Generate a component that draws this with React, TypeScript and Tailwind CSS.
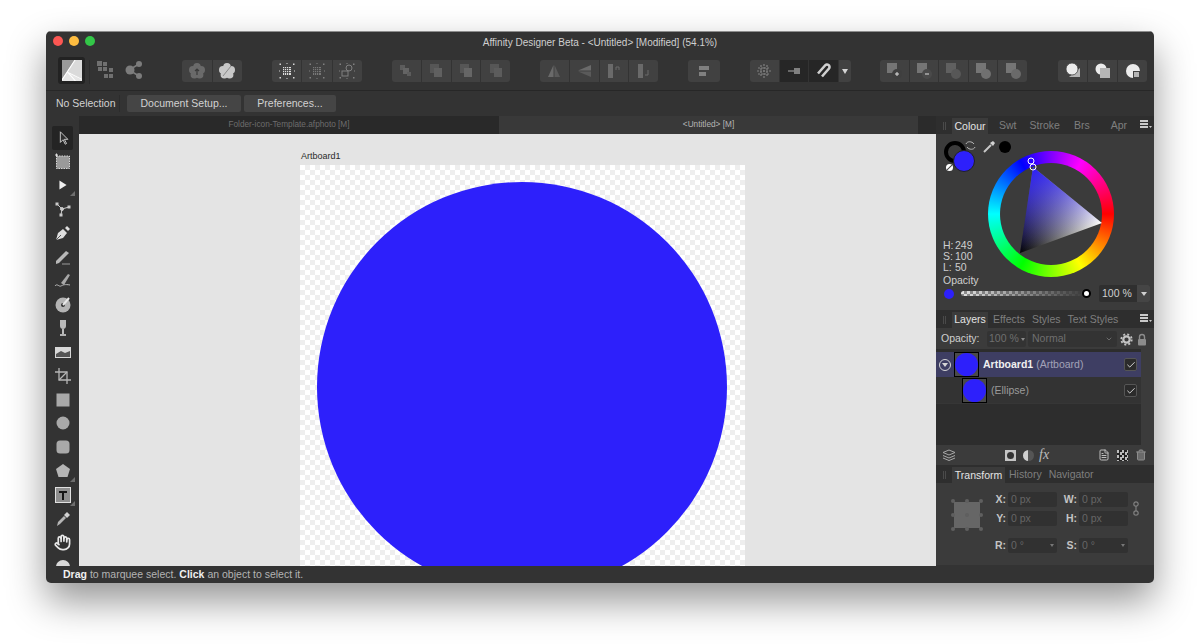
import type { ReactNode } from "react";
import { Check, ChevronDown, FileText, Trash2, Hand } from "lucide-react";

const BLUE = "#2d20fb";

function Svg({ children, size = 18 }: { children: ReactNode; size?: number }) {
  return (
    <svg width={size} height={size} viewBox="0 0 18 18">
      {children}
    </svg>
  );
}

function Btn({ children, dark }: { children: ReactNode; dark?: boolean }) {
  return (
    <div
      className={`flex h-[22px] min-w-0 flex-1 items-center justify-center ${dark ? "bg-[#262626]" : "bg-[#414141]"}`}
    >
      {children}
    </div>
  );
}

function Group({ children, cls }: { children: ReactNode; cls: string }) {
  return <div className={`flex gap-px overflow-hidden rounded-[3px] ${cls}`}>{children}</div>;
}

const dim = "#6a6a6a";
const dim2 = "#808080";
const lit = "#d6d6d6";

function Corners({ c = lit }: { c?: string }) {
  return (
    <g fill={c}>
      <rect x="1.500" y="1.500" width="1.500" height="1.500" />
      <rect x="15" y="1.500" width="1.500" height="1.500" />
      <rect x="1.500" y="15" width="1.500" height="1.500" />
      <rect x="15" y="15" width="1.500" height="1.500" />
      <rect x="8.500" y="1" width="1" height="1" />
      <rect x="8.500" y="16" width="1" height="1" />
      <rect x="1" y="8.500" width="1" height="1" />
      <rect x="16" y="8.500" width="1" height="1" />
    </g>
  );
}

function Flower({ c }: { c: string }) {
  return (
    <g fill={c}>
      <circle cx="9" cy="4.800" r="3.800" />
      <circle cx="13.200" cy="7.900" r="3.800" />
      <circle cx="11.600" cy="12.800" r="3.800" />
      <circle cx="6.400" cy="12.800" r="3.800" />
      <circle cx="4.800" cy="7.900" r="3.800" />
      <circle cx="9" cy="9.500" r="4" />
    </g>
  );
}

function GridSquare({ fill }: { fill: string }) {
  return (
    <>
      <path d="M5 5h8v8H5z" fill={fill} />
      <path d="M6.500 5v8M8.500 5v8M10.500 5v8M5 6.500h8M5 8.500h8M5 10.500h8" stroke="#414141" strokeWidth=".8" />
    </>
  );
}

function TwoSquares({ c }: { c: string }) {
  return (
    <Svg>
      <rect x="3" y="2" width="9" height="9" fill="#565656" />
      <rect x="7" y="6" width="8" height="9" fill={c} />
    </Svg>
  );
}

function BooleanIcon({ c, sq = "#757575", glyph }: { c: string; sq?: string; glyph?: string }) {
  return (
    <Svg>
      <rect x="2" y="1" width="10" height="10" fill={sq} />
      <circle cx="12" cy="12" r="5" fill={c} />
      {glyph && <path d={glyph} stroke="#dcdcdc" strokeWidth="1" />}
    </Svg>
  );
}

function Toolbar() {
  return (
    <div className="flex h-[31px] items-start border-b border-[#272727] pl-[12px]">
      <div className="-mt-[3px] flex h-[27px] w-[27px] items-center justify-center rounded-[3px] bg-[#222222]">
        <svg width="20" height="21" viewBox="0 0 20 21">
          <rect width="20" height="21" fill="#e6e6e6" />
          <path d="M0 0h13L0 19z" fill="#9a9a9a" />
          <path d="M13 0 0 20M5.500 12 20 19M5.500 12l8 9" stroke="#ffffff" strokeWidth="1.100" fill="none" />
          <path d="M6 12 14 0h6v19z" fill="#d2d2d2" opacity=".6" />
        </svg>
      </div>
      <div className="ml-[4px] h-[24px] w-px bg-[#2b2b2b]" />
      <div className="ml-[7px] mt-px">
        <svg width="18" height="18" viewBox="0 0 18 18" fill="#707070">
          <rect x="0" y="0" width="5" height="5" />
          <rect x="6" y="1" width="4" height="4" />
          <rect x="1" y="6" width="4" height="4" />
          <rect x="6" y="6" width="4" height="4" />
          <rect x="12" y="7" width="4" height="4" />
          <rect x="7" y="13" width="4" height="4" />
          <rect x="12" y="13" width="4" height="4" />
        </svg>
      </div>
      <div className="ml-[10px] mt-px">
        <svg width="18" height="18" viewBox="0 0 18 18">
          <path d="M14 3 4 9l10 6" stroke="#7c7c7c" strokeWidth="1.600" fill="none" />
          <circle cx="14" cy="3" r="3" fill="#7c7c7c" />
          <circle cx="5" cy="9" r="4.500" fill="#7c7c7c" />
          <circle cx="14" cy="15" r="3" fill="#7c7c7c" />
        </svg>
      </div>
      <Group cls="ml-[39px] w-[60px]">
        <Btn>
          <Svg>
            <Flower c={dim} />
            <path d="M9 13V7M7 9l2-2 2 2" stroke="#3a3a3a" strokeWidth="1.200" fill="none" />
          </Svg>
        </Btn>
        <Btn>
          <Svg>
            <Flower c="#c8c8c8" />
            <path d="M5 14 13 4" stroke="#8a8a8a" strokeWidth="1" />
          </Svg>
        </Btn>
      </Group>
      <Group cls="ml-[30px] w-[90px]">
        <Btn>
          <Svg>
            <Corners />
            <GridSquare fill="#dcdcdc" />
          </Svg>
        </Btn>
        <Btn>
          <Svg>
            <Corners c={dim2} />
            <GridSquare fill="#777777" />
          </Svg>
        </Btn>
        <Btn>
          <Svg>
            <Corners c={dim2} />
            <rect x="4" y="9" width="6" height="5" fill="none" stroke={dim2} />
            <circle cx="11" cy="6" r="3" fill="none" stroke={dim2} />
          </Svg>
        </Btn>
      </Group>
      <Group cls="ml-[30px] w-[118px]">
        <Btn>
          <Svg>
            <rect x="3" y="3" width="5" height="5" fill="#5c5c5c" />
            <rect x="6" y="6" width="6" height="6" fill="#646464" />
            <rect x="10" y="10" width="4" height="4" fill="#5c5c5c" />
          </Svg>
        </Btn>
        <Btn>
          <TwoSquares c="#606060" />
        </Btn>
        <Btn>
          <TwoSquares c="#666666" />
        </Btn>
        <Btn>
          <TwoSquares c="#5c5c5c" />
        </Btn>
      </Group>
      <Group cls="ml-[30px] w-[118px]">
        <Btn>
          <Svg>
            <path d="M8.500 3v12H3z" fill={dim} />
            <path d="M9.500 3l5.500 12H9.500z" fill="#5a5a5a" />
          </Svg>
        </Btn>
        <Btn>
          <Svg>
            <path d="M16 3v5.500L3 8.500z" fill={dim} />
            <path d="M16 9.500V15L3 9.500z" fill="#5a5a5a" />
          </Svg>
        </Btn>
        <Btn>
          <Svg>
            <rect x="3" y="2" width="5" height="14" fill={dim} />
            <path d="M11 8V5h3v3" stroke={dim} fill="none" />
          </Svg>
        </Btn>
        <Btn>
          <Svg>
            <rect x="3" y="2" width="5" height="14" fill={dim} />
            <path d="M13 8v5h-3" stroke={dim} fill="none" />
          </Svg>
        </Btn>
      </Group>
      <Group cls="ml-[30px] w-[32px]">
        <Btn>
          <Svg>
            <rect x="4" y="4" width="10" height="4" fill={dim2} />
            <rect x="4" y="10" width="7" height="4" fill={dim2} />
          </Svg>
        </Btn>
      </Group>
      <Group cls="ml-[30px] w-[101px]">
        <Btn>
          <Svg>
            <path d="M9 2v14M2 9h14M6 3v12M12 3v12M3 6h12M3 12h12" stroke={dim2} strokeWidth="1.200" strokeDasharray="2 1" />
          </Svg>
        </Btn>
        <Btn dark>
          <Svg>
            <path d="M3 9h6" stroke={dim2} strokeWidth="1.400" />
            <rect x="9" y="6" width="6" height="6" fill={dim2} />
          </Svg>
        </Btn>
        <Btn dark>
          <Svg>
            <path d="M3 11.500 10 3.500a2.500 2.500 0 0 1 4 3l-7 8" stroke="#cfcfcf" strokeWidth="2.600" fill="none" />
          </Svg>
        </Btn>
        <div className="flex h-[22px] w-[12px] shrink-0 items-center justify-center bg-[#414141]">
          <div className="h-0 w-0 border-x-[3px] border-t-[5px] border-x-transparent border-t-[#d4d4d4]" />
        </div>
      </Group>
      <Group cls="ml-[29px] w-[147px]">
        <Btn>
          <BooleanIcon c="#3f3f3f" glyph="M10 12h4M12 10v4" />
        </Btn>
        <Btn>
          <BooleanIcon c="#4a4a4a" glyph="M10 12h4" />
        </Btn>
        <Btn>
          <BooleanIcon c="#575757" sq="#606060" />
        </Btn>
        <Btn>
          <BooleanIcon c="#707070" />
        </Btn>
        <Btn>
          <BooleanIcon c="#6a6a6a" />
        </Btn>
      </Group>
      <Group cls="ml-[31px] w-[89px]">
        <Btn>
          <Svg>
            <path d="M5 15h11V6z" fill="#b5b5b5" />
            <circle cx="8" cy="7" r="6" fill="#ececec" stroke="#414141" strokeWidth=".8" />
          </Svg>
        </Btn>
        <Btn>
          <Svg>
            <circle cx="7" cy="7" r="5.500" fill="#ececec" />
            <rect x="6" y="6" width="10" height="10" fill="#b5b5b5" />
          </Svg>
        </Btn>
        <Btn>
          <Svg>
            <circle cx="9" cy="9" r="7" fill="#ececec" />
            <path d="M9 9h7v7H9z" fill="#414141" />
            <path d="M10 10h5v5h-5z" fill="#b5b5b5" />
          </Svg>
        </Btn>
      </Group>
    </div>
  );
}

function ContextBar() {
  return (
    <div className="flex h-[25px] items-center pl-[10px] text-[10.5px] text-[#d2d2d2]">
      <span className="w-[59px] whitespace-nowrap">No Selection</span>
      <div className="ml-[4px] h-[17px] w-px bg-[#2c2c2c]" />
      <div className="ml-[7px] flex h-[17px] w-[114px] items-center justify-center rounded-[2px] bg-[#454545]">
        Document Setup...
      </div>
      <div className="ml-[3px] flex h-[17px] w-[92px] items-center justify-center rounded-[2px] bg-[#454545]">
        Preferences...
      </div>
    </div>
  );
}

const toolC = "#c9c9c9";

const tools: ReactNode[] = [
  <path key="a" d="M6 2v12l3-3 2.500 5 1.500-.8-2.500-4.700h4z" fill="#303030" stroke="#d6d6d6" strokeWidth="1" />,
  <g key="b">
    <rect x="2.500" y="3" width="13" height="12.500" fill="#9a9a9a" stroke="#d6d6d6" strokeDasharray="1.500 1" />
    <path d="M1 2h3M2.500 .5v3" stroke="#e0e0e0" />
  </g>,
  <path key="c" d="M5 4l8 5-8 5z" fill="#f0f0f0" />,
  <g key="d" stroke={toolC} strokeWidth="1" fill="none">
    <path d="M8 9 3 4M8 9l7-2M8 9l-1 6" />
    <circle cx="8" cy="9" r="1.500" fill={toolC} />
    <rect x="2" y="3" width="2" height="2" fill={toolC} />
    <rect x="14" y="6" width="2" height="2" fill={toolC} />
    <rect x="6" y="14" width="2" height="2" fill={toolC} />
  </g>,
  <g key="e">
    <path d="M2 16l2-7 5-4 4 4-4 5z" fill="#dedede" />
    <path d="M2 16l5-5" stroke="#333" strokeWidth=".8" />
    <path d="M11 4l2-2 3 3-2 2z" fill="#dedede" />
  </g>,
  <g key="f">
    <path d="M2 13 12 3l3 2L5 15l-3 1z" fill="#b8b8b8" />
    <path d="M8 16h8" stroke="#9a9a9a" />
  </g>,
  <g key="g">
    <path d="M7 11 14 2l2 1-6 10z" fill="#a8a8a8" />
    <path d="M1 14c2-3 4 1 6 0s4-2 9-1" stroke="#b8b8b8" fill="none" />
  </g>,
  <g key="h">
    <circle cx="9" cy="10" r="7.500" fill="#b4b4b4" />
    <circle cx="9" cy="10" r="2" fill="#333" />
    <path d="M9 10 15 3" stroke="#e8e8e8" strokeWidth="2" />
  </g>,
  <g key="i">
    <path d="M6 1h6v6c0 2-1.500 3-3 3S6 9 6 7z" fill="#bbbbbb" />
    <path d="M9 10v5M6 16h6" stroke="#dcdcdc" strokeWidth="1.600" />
  </g>,
  <g key="j">
    <rect x="1" y="4" width="16" height="11" fill="#d8d8d8" />
    <path d="M2 11l5-3 4 2 5-2v6H2z" fill="#555" />
  </g>,
  <g key="k" stroke="#b5b5b5" fill="none" strokeWidth="1.300">
    <path d="M5 1v12h12M1 5h12v12" />
    <path d="M5 13 13 5" />
  </g>,
  <rect key="l" x="2.500" y="2.500" width="13" height="13" fill="#a9a9a9" />,
  <circle key="m" cx="9" cy="9" r="6.500" fill="#a9a9a9" />,
  <rect key="n" x="2.500" y="2.500" width="13" height="13" rx="3.500" fill="#a9a9a9" />,
  <path key="o" d="M9 2l7 5-2.500 8h-9L2 7z" fill="#b5b5b5" />,
  <g key="p">
    <rect x="1.500" y="1.500" width="15" height="15" fill="#8e8e8e" stroke="#e0e0e0" />
    <path d="M5 5h8v2h-3v7H8V7H5z" fill="#141414" />
  </g>,
  <g key="q">
    <path d="M3 16l1-4 6-6 2 2-6 6z" fill="#b5b5b5" />
    <path d="M10 5l3-3 3 3-3 3z" fill="#d2d2d2" />
  </g>,
];

function ToolStrip() {
  return (
    <div className="flex h-full w-[33px] flex-col items-center overflow-hidden bg-[#333333] pt-[10px]">
      {tools.map((t, i) => (
        <div
          key={i}
          className={`relative flex h-[23.8px] w-[21px] shrink-0 items-center justify-center ${i === 0 ? "rounded-[2px] bg-[#242424]" : ""}`}
        >
          <Svg size={i === 0 || i === 2 ? 16 : 18}>{t}</Svg>
          {(i === 2 || i === 14 || i === 15) && (
            <div className="absolute bottom-[1px] right-[-2px] h-0 w-0 border-b-[5px] border-l-[5px] border-b-[#6e6e6e] border-l-transparent" />
          )}
        </div>
      ))}
      <div className="flex h-[23.8px] shrink-0 items-center justify-center">
        <Hand size={17} color="#e8e8e8" strokeWidth={2.400} />
      </div>
      <div className="mt-[6px] h-[16px] w-[14px] shrink-0 rounded-full bg-[#d8d8d8]" />
    </div>
  );
}

function CenterArea() {
  return (
    <div className="flex w-[857px] flex-col">
      <div className="flex h-[18px] text-[8.25px] leading-[18px]">
        <div className="w-[420px] bg-[#292929] text-center text-[#6d6d6d]">Folder-icon-Template.afphoto [M]</div>
        <div className="w-[419px] bg-[#393939] text-center text-[#b4b4b4]">&lt;Untitled&gt; [M]</div>
        <div className="flex-1 bg-[#2b2b2b]" />
      </div>
      <div className="h-[432px] overflow-hidden bg-[#e4e4e4] pl-[221px] pt-[17px]">
        <div className="h-[14px] pl-px text-[9px] leading-[10px] text-[#2a2a2a]">Artboard1</div>
        <div className="h-[445px] w-[445px] bg-[image:repeating-conic-gradient(#eeeeee_0_25%,#ffffff_0_50%)] bg-[length:10px_10px] p-[17px]">
          <div className="h-[410px] w-[410px] rounded-full bg-[#2d20fb]" />
        </div>
      </div>
    </div>
  );
}

function PanelTabs({ children, menu }: { children: ReactNode; menu?: boolean }) {
  return (
    <div className="relative flex h-[18px] items-end bg-[#2e2e2e] pl-[7px] text-[10.5px] text-[#7f7f7f]">
      <div className="mb-[4px] mr-[6px] h-[8px] w-[3px] border-x border-[#4a4a4a]" />
      {children}
      {menu && (
        <svg className="absolute right-[2px] top-[4px]" width="12" height="9" viewBox="0 0 12 9" fill="#c8c8c8">
          <rect x="0" y="0" width="8" height="2" />
          <rect x="0" y="3" width="8" height="2" />
          <rect x="0" y="6" width="8" height="2" />
          <path d="M9 6h3l-1.500 2z" />
        </svg>
      )}
    </div>
  );
}

function ActiveTab({ label, w }: { label: string; w: string }) {
  return <div className={`flex h-[16px] items-center justify-center bg-[#3b3b3b] text-[#e4e4e4] ${w}`}>{label}</div>;
}

function HslRow({ k, v }: { k: string; v: string }) {
  return (
    <div className="flex">
      <span className="w-[12px]">{k}</span>
      <span>{v}</span>
    </div>
  );
}

function ColourPanel() {
  return (
    <div className="h-[176px] bg-[#3b3b3b]">
      <div className="flex h-[140px]">
        <div className="flex w-[52px] flex-col justify-between pb-[1px] pl-[7px] pt-[7px] text-[10.5px] leading-[11px] text-[#cfcfcf]">
          <div className="relative h-[34px] w-[34px]">
            <div className="ml-px h-[22px] w-[22px] rounded-full border-[4px] border-black" />
            <div className="absolute left-[10px] top-[9px] h-[22px] w-[22px] rounded-full border border-[#222] bg-[#2d20fb]" />
            <div className="absolute left-[3px] top-[23px] flex h-[7px] w-[7px] items-center justify-center rounded-full bg-white">
              <div className="h-px w-[7px] -rotate-45 bg-[#444]" />
            </div>
            <svg className="absolute left-[22px] top-[-1px]" width="11" height="11" viewBox="0 0 11 11">
              <path d="M1 4c1-3 6-3 8 0M10 7c-1 3-6 3-8 0" stroke="#b9b9b9" fill="none" />
            </svg>
          </div>
          <div>
            <HslRow k="H:" v="249" />
            <HslRow k="S:" v="100" />
            <HslRow k="L:" v="50" />
          </div>
        </div>
        <div className="relative mt-[17px] flex h-[126px] w-[126px] items-center justify-center rounded-full bg-[image:conic-gradient(from_90deg,#ff0000,#ffff00,#00ff00,#00ffff,#0000ff,#ff00ff,#ff0000)]">
          <div className="h-[102px] w-[102px] rounded-full bg-[#3b3b3b]" />
          <svg className="absolute left-0 top-0" width="126" height="126" viewBox="0 0 126 126">
            <defs>
              <linearGradient id="bw" gradientUnits="userSpaceOnUse" x1="32" y1="102" x2="114" y2="72">
                <stop offset="0" stopColor="#000" />
                <stop offset="1" stopColor="#fff" />
              </linearGradient>
              <linearGradient id="hue" gradientUnits="userSpaceOnUse" x1="45" y1="16" x2="73" y2="87">
                <stop offset="0" stopColor={BLUE} />
                <stop offset="1" stopColor={BLUE} stopOpacity="0" />
              </linearGradient>
            </defs>
            <path d="M45 16 114 72 32 102z" fill="url(#bw)" />
            <path d="M45 16 114 72 32 102z" fill="url(#hue)" />
            <circle cx="45" cy="16" r="3" fill="none" stroke="#fff" />
            <circle cx="43" cy="10" r="3" fill="none" stroke="#fff" />
          </svg>
          <svg className="absolute left-[-6px] top-[-11px]" width="14" height="14" viewBox="0 0 14 14">
            <path d="M2 12 9 5" stroke="#c8c8c8" strokeWidth="2" />
            <path d="M8 3l3 3 2-3-2-2z" fill="#d2d2d2" />
          </svg>
          <div className="absolute left-[11px] top-[-10px] h-[12px] w-[12px] rounded-full bg-black" />
        </div>
      </div>
      <div className="pl-[7px] text-[10.5px] leading-[13px] text-[#cfcfcf]">Opacity</div>
      <div className="-mt-[2px] flex items-center pl-[8px]">
        <div className="h-[10px] w-[10px] rounded-full bg-[#2d20fb]" />
        <div className="relative ml-[7px] h-[5px] w-[126px] rounded-full bg-[image:repeating-conic-gradient(#8e8e8e_0_25%,#e2e2e2_0_50%)] bg-[length:6px_6px]">
          <div className="h-full w-full rounded-full bg-[image:linear-gradient(90deg,#ffffff00,#3b3b3b)]" />
          <div className="absolute right-[-4px] top-[-2px] h-[9px] w-[9px] rounded-full border-2 border-black bg-white" />
        </div>
        <div className="ml-[12px] flex h-[17px] w-[51px] overflow-hidden rounded-[2px] bg-[#2f2f2f] text-[10.5px] leading-[17px] text-[#d0d0d0]">
          <div className="w-[38px] pl-[3px]">100 %</div>
          <div className="flex flex-1 items-center justify-center bg-[#454545]">
            <div className="h-0 w-0 border-x-[3px] border-t-[4px] border-x-transparent border-t-[#d0d0d0]" />
          </div>
        </div>
      </div>
    </div>
  );
}

function Thumb() {
  return (
    <div className="flex h-[25px] w-[25px] shrink-0 items-center justify-center border border-black bg-[#4a4a4a]">
      <div className="h-[23px] w-[23px] rounded-full bg-[#2d20fb]" />
    </div>
  );
}

function Tick() {
  return (
    <div className="flex h-[13px] w-[13px] items-center justify-center rounded-[2px] border border-[#555555] bg-[#2b2b2b]">
      <Check size={10} color="#f0f0f0" strokeWidth={2} />
    </div>
  );
}

function LayersPanel() {
  return (
    <div className="bg-[#3b3b3b]">
      <PanelTabs menu>
        <ActiveTab label="Layers" w="w-[36px]" />
        <span className="ml-[5px]">Effects</span>
        <span className="ml-[7px]">Styles</span>
        <span className="ml-[7px]">Text Styles</span>
      </PanelTabs>
      <div className="flex h-[21px] items-center pl-[5px] pt-px text-[10.5px]">
        <span className="w-[46px] text-[#cfcfcf]">Opacity:</span>
        <div className="flex h-[16px] w-[39px] items-center rounded-[2px] bg-[#333333] pl-[2px] text-[#6f6f6f]">
          100 %
          <div className="ml-[2px] h-0 w-0 border-x-[2px] border-t-[3px] border-x-transparent border-t-[#8a8a8a]" />
        </div>
        <div className="ml-[2px] flex h-[16px] w-[89px] items-center justify-between rounded-[2px] bg-[#333333] pl-[4px] pr-[4px] text-[#6f6f6f]">
          Normal
          <ChevronDown size={8} color="#8a8a8a" />
        </div>
        <svg className="ml-[3px]" width="13" height="13" viewBox="0 0 13 13" fill="none">
          <circle cx="6.500" cy="6.500" r="3.200" stroke="#c4c4c4" strokeWidth="2.200" />
          <circle cx="6.500" cy="6.500" r="5.200" stroke="#c4c4c4" strokeWidth="1.800" strokeDasharray="2 2.100" />
        </svg>
        <svg className="ml-[3px]" width="12" height="13" viewBox="0 0 12 13" fill="none">
          <path d="M3.500 6V4a2.500 2.500 0 0 1 5 0v2" stroke="#8c8c8c" strokeWidth="1.400" />
          <rect x="2" y="6" width="8" height="6.500" rx="1" fill="#8c8c8c" />
        </svg>
      </div>
      <div className="flex h-[96px]">
        <div className="w-[205px] bg-[#2d2d2d] pt-[3px] text-[10.5px]">
          <div className="flex h-[25px] items-center bg-[#3e3e63] pl-[3px]">
            <div className="mr-[3px] flex h-[12px] w-[12px] items-center justify-center rounded-full border border-[#d6d6d6]">
              <div className="h-0 w-0 border-x-[3px] border-t-[4px] border-x-transparent border-t-[#d6d6d6]" />
            </div>
            <Thumb />
            <span className="ml-[4px] font-bold text-[#f0f0f0]">Artboard1</span>
            <span className="ml-[3px] text-[#a2a2b8]">(Artboard)</span>
            <div className="ml-auto mr-[4px]">
              <Tick />
            </div>
          </div>
          <div className="flex h-[27px] items-center border-b border-[#363636] bg-[#333333] pl-[26px] pt-px">
            <Thumb />
            <span className="ml-[4px] text-[#9a9a9a]">(Ellipse)</span>
            <div className="ml-auto mr-[4px]">
              <Tick />
            </div>
          </div>
        </div>
        <div className="flex-1 bg-[#3b3b3b]" />
      </div>
      <div className="flex h-[20px] items-center bg-[#3b3b3b] pl-[6px]">
        <svg width="14" height="13" viewBox="0 0 14 13" fill="none" stroke="#a8a8a8">
          <path d="M1 3.500 7 1l6 2.500L7 6zM1 6.500 7 9l6-2.500M1 9l6 2.500L13 9" />
        </svg>
        <div className="ml-[49px] h-[11px] w-[11px] bg-[#c4c4c4] p-[2px]">
          <div className="h-[7px] w-[7px] rounded-full bg-[#333333]" />
        </div>
        <div className="ml-[7px] h-[11px] w-[11px] rounded-full bg-[image:linear-gradient(90deg,#cfcfcf_50%,#555555_50%)]" />
        <span className="ml-[5px] w-[13px] font-['Liberation_Serif',serif] text-[14px] italic leading-[14px] text-[#bdbdbd]">fx</span>
        <FileText className="ml-[46px]" size={12} color="#bdbdbd" />
        <div className="ml-[7px] h-[11px] w-[11px] bg-[image:repeating-conic-gradient(#222222_0_25%,#bdbdbd_0_50%)] bg-[length:5px_5px]" />
        <Trash2 className="ml-[7px]" size={12} color="#8c8c8c" fill="#6a6a6a" />
      </div>
    </div>
  );
}

function Field({ label, value, arrow }: { label: string; value: string; arrow?: boolean }) {
  return (
    <div className="flex items-center">
      <span className="w-[20px] text-right font-bold text-[#c4c4c4]">{label}</span>
      <div className="ml-[2px] flex h-[15px] w-[49px] items-center justify-between rounded-[2px] bg-[#313131] px-[3px] text-[#666666]">
        {value}
        {arrow && <div className="h-0 w-0 border-x-[2px] border-t-[3px] border-x-transparent border-t-[#777777]" />}
      </div>
    </div>
  );
}

function TransformPanel() {
  return (
    <div className="h-[100px]">
      <PanelTabs>
        <ActiveTab label="Transform" w="w-[53px] pt-[2px]" />
        <span className="ml-[4px]">History</span>
        <span className="ml-[7px]">Navigator</span>
      </PanelTabs>
      <div className="flex h-[82px] bg-[#3b3b3b] pl-[15px] pt-[9px] text-[10.5px]">
        <svg className="mt-[7px] shrink-0" width="32" height="32" viewBox="0 0 32 32" fill="#5f5f5f">
          <rect x="3" y="3" width="26" height="26" fill="#666666" />
          {[2, 16, 30].flatMap((x) =>
            [2, 16, 30].map((y) => <circle key={`${x}-${y}`} cx={x} cy={y} r="2" />),
          )}
        </svg>
        <div className="ml-[3px] flex flex-col">
          <div className="grid grid-cols-[71px_71px] gap-y-[3px]">
            <Field label="X:" value="0 px" />
            <Field label="W:" value="0 px" />
            <Field label="Y:" value="0 px" />
            <Field label="H:" value="0 px" />
          </div>
          <div className="mt-[11px] grid grid-cols-[71px_71px]">
            <Field label="R:" value="0 °" arrow />
            <Field label="S:" value="0 °" arrow />
          </div>
        </div>
        <svg className="ml-[5px] mt-[8px]" width="6" height="17" viewBox="0 0 6 17" fill="none" stroke="#7f7f7f" strokeWidth="1.200">
          <circle cx="3" cy="4" r="2.200" />
          <circle cx="3" cy="13" r="2.200" />
          <path d="M3 6v5" />
        </svg>
      </div>
    </div>
  );
}

function RightPanels() {
  return (
    <div className="flex w-[218px] flex-col">
      <PanelTabs menu>
        <ActiveTab label="Colour" w="w-[36px] pt-[2px]" />
        <span className="ml-[11px]">Swt</span>
        <span className="ml-[13px]">Stroke</span>
        <span className="ml-[14px]">Brs</span>
        <span className="ml-[21px]">Apr</span>
      </PanelTabs>
      <ColourPanel />
      <LayersPanel />
      <TransformPanel />
    </div>
  );
}

export default function App() {
  return (
    <div className="h-[644px] w-[1200px] overflow-hidden bg-white pl-[46px] pt-[31px] font-['Liberation_Sans',Arial,sans-serif]">
      <div className="flex h-[552px] w-[1108px] flex-col overflow-hidden rounded-[5px] bg-[#333333] shadow-[0_18px_38px_rgba(0,0,0,0.42)]">
        <div className="relative flex h-[22px] shrink-0 items-center justify-center border-t border-[#8d8d8d] text-[10px] text-[#cfcfcf]">
          <div className="absolute left-[7px] top-[4px] flex gap-[6px]">
            <div className="h-[10px] w-[10px] rounded-full bg-[#fc5753]" />
            <div className="h-[10px] w-[10px] rounded-full bg-[#fdbc40]" />
            <div className="h-[10px] w-[10px] rounded-full bg-[#33c748]" />
          </div>
          Affinity Designer Beta - &lt;Untitled&gt; [Modified] (54.1%)
        </div>
        <div className="h-[7px] shrink-0" />
        <Toolbar />
        <ContextBar />
        <div className="flex h-[450px] shrink-0">
          <ToolStrip />
          <CenterArea />
          <RightPanels />
        </div>
        <div className="flex h-[17px] items-center pl-[17px] text-[10.5px] text-[#b4b4b4]">
          <b className="text-[#f0f0f0]">Drag</b>
          <span className="ml-[3px]">to marquee select.</span>
          <b className="ml-[3px] text-[#f0f0f0]">Click</b>
          <span className="ml-[3px]">an object to select it.</span>
        </div>
      </div>
    </div>
  );
}
